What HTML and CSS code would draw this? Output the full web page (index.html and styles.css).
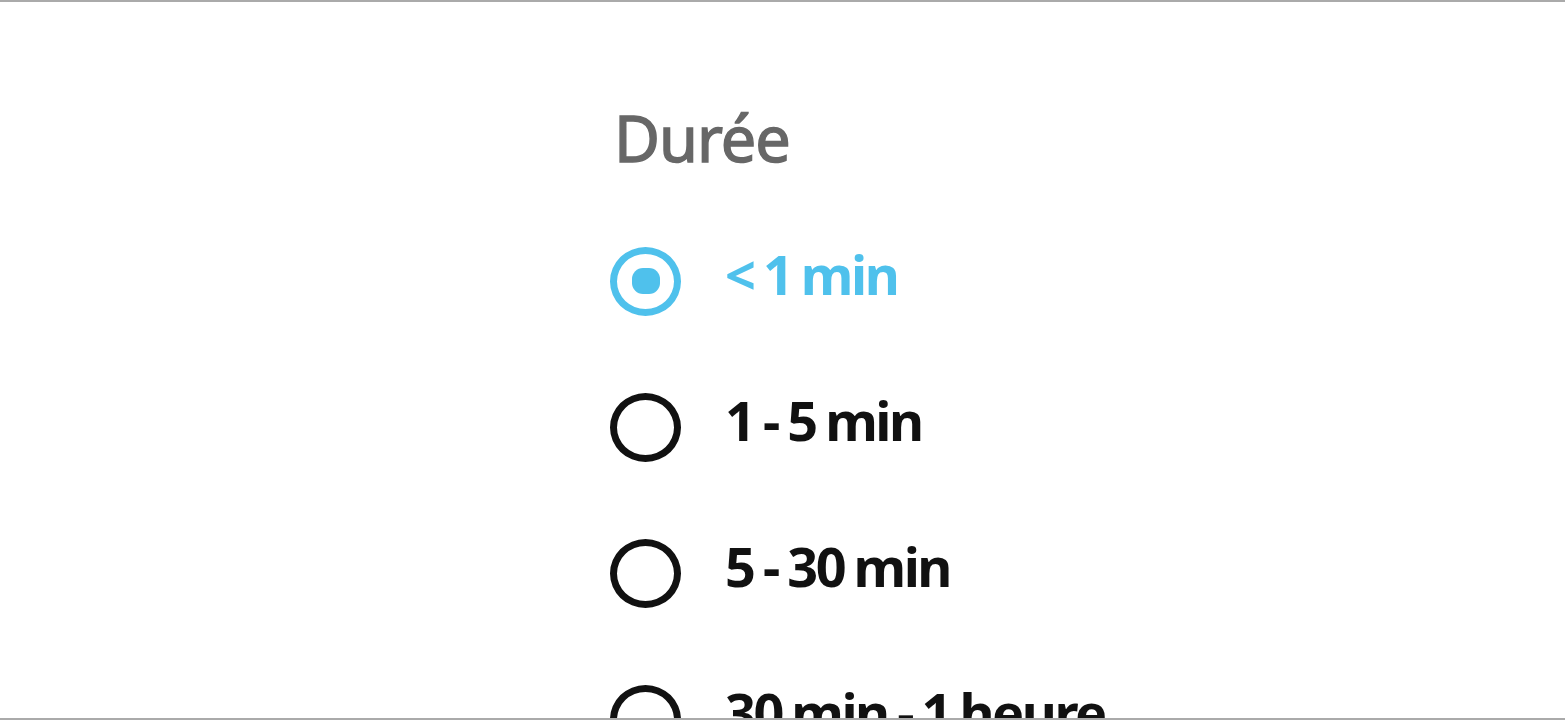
FILE: index.html
```html
<!DOCTYPE html>
<html>
<head>
	<title>Durée</title>
	<link rel="stylesheet" href="styles.css">
</head>
<body>
	<div class="screen">
		<div class="panel">
			<h2 class="title">Durée</h2>
			<div class="options">
				<label class="option selected">
					<span class="radio"><span class="dot"></span></span>
					<span class="label">&lt; 1 min</span>
				</label>
				<label class="option">
					<span class="radio"></span>
					<span class="label">1 - 5 min</span>
				</label>
				<label class="option">
					<span class="radio"></span>
					<span class="label">5 - 30 min</span>
				</label>
				<label class="option">
					<span class="radio"></span>
					<span class="label">30 min - 1 heure</span>
				</label>
			</div>
		</div>
	</div>
</body>
</html>
```

FILE: styles.css
```css
html, body {
	margin: 0;
	padding: 0;
	background-color: #fff;
}
body {
	font-family: "Noto Sans", "Open Sans", sans-serif;
	border-top: 2px solid #aaa;
	border-bottom: 2px solid #aaa;
	height: 716px;
	overflow: hidden;
}
.screen {
	height: 716px;
	overflow: hidden;
}
.panel {
	padding-top: 104px;
	padding-left: 610px;
}
.title {
	margin: 0 0 38px 4px;
	font-size: 63px;
	line-height: 64px;
	font-weight: 400;
	color: #676767;
	-webkit-text-stroke: 1.4px #676767;
	letter-spacing: -1px;
}
.options {
	display: flex;
	flex-direction: column;
}
.option {
	display: flex;
	align-items: center;
	height: 146px;
	gap: 44px;
}
.radio {
	box-sizing: border-box;
	width: 71px;
	height: 69px;
	border: 7px solid #111;
	border-radius: 50%;
	display: flex;
	align-items: center;
	justify-content: center;
}
.dot {
	width: 28px;
	height: 26px;
	border-radius: 11px;
	background-color: #4fc1ec;
}
.label {
	font-size: 54px;
	font-weight: 700;
	color: #111;
	letter-spacing: -2.5px;
	word-spacing: -2px;
	margin-top: -14px;
}
.option.selected .radio {
	border-color: #4fc1ec;
}
.option.selected .label {
	color: #4fc1ec;
}
```
